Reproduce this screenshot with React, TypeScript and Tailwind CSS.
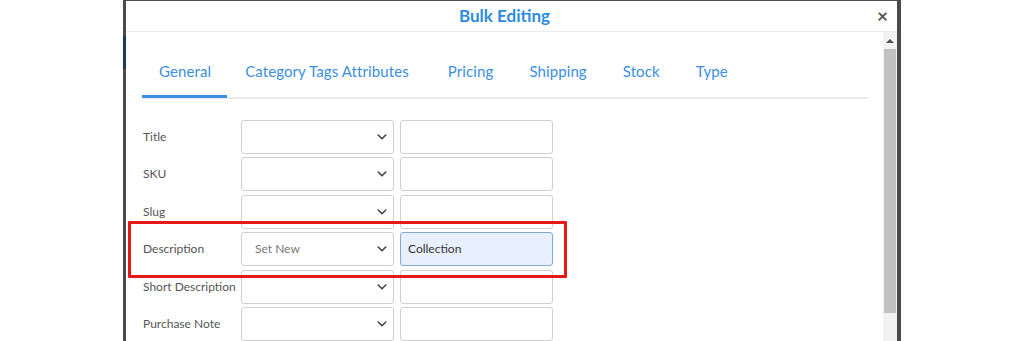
const rows = [
  { label: "Title" },
  { label: "SKU" },
  { label: "Slug" },
  { label: "Description", select: "Set New", value: "Collection" },
  { label: "Short Description" },
  { label: "Purchase Note" },
];

const tabs = [
  { name: "General", cls: "pl-[17px] pr-[16px]" },
  { name: "Category Tags Attributes", cls: "pl-[18px] pr-[21px]" },
  { name: "Pricing", cls: "px-[18px]" },
  { name: "Shipping", cls: "px-[18px]" },
  { name: "Stock", cls: "px-[18px]" },
  { name: "Type", cls: "px-[18px]" },
];

function Chevron() {
  return (
    <svg width="10" height="6" viewBox="0 0 10 6" className="text-[#444]">
      <path d="M1.2 1 5 4.8 8.8 1" fill="none" stroke="currentColor" strokeWidth="1.6" strokeLinecap="round" strokeLinejoin="round" />
    </svg>
  );
}

export default function App() {
  return (
    <div className="w-[1024px] h-[341px] bg-white overflow-hidden font-['Lato',sans-serif]">
      <div className="relative ml-[123px] w-[778px] h-[341px] border-l-[3px] border-r-[4px] border-t border-[#4a4a4a] flex flex-col">
        {/* dark strip of the page behind the dialog */}
        <div className="absolute -left-[3px] top-[35px] w-[3px] h-[33px] bg-[#1d3a5c]"></div>

        {/* Header */}
        <div className="h-[31px] shrink-0 flex items-center justify-center relative border-b border-[#ececec] pr-[14px]">
          <h1 className="text-[17px] font-bold text-[#2b8be0]">Bulk Editing</h1>
          <span className="absolute right-[9px] top-[5px] text-[19px] leading-none font-bold text-[#555]">×</span>
        </div>

        <div className="flex flex-1 min-h-0">
          {/* Body */}
          <div className="flex-1 pl-[16px] pr-[15px] relative">
            <div className="flex border-b-2 border-[#e8e8e8]">
              {tabs.map((t, i) => (
                <div
                  key={t.name}
                  className={
                    t.cls +
                    (i === 0
                      ? " pt-[30px] pb-[15px] text-[15px] leading-[18px] tracking-[0.1px] text-[#3a8fe0] border-b-[3px] border-[#3a8fe0] -mb-[1px]"
                      : " pt-[30px] pb-[15px] text-[15px] leading-[18px] tracking-[0.1px] text-[#3a8fe0] border-b-[3px] border-transparent -mb-[1px]")
                  }
                >
                  {t.name}
                </div>
              ))}
            </div>

            <div className="mt-[21px] flex flex-col gap-y-[3.4px]">
              {rows.map((r) => (
                <div key={r.label} className="flex items-center h-[34px]">
                  <div className="w-[99px] pl-[1px] text-[12px] text-[#555] whitespace-nowrap">{r.label}</div>
                  <div className="w-[153px] h-[34px] border border-[#cfcfcf] rounded-[3px] flex items-center justify-between pl-[13px] pr-[6px] bg-white">
                    <span className="text-[12px] text-[#777]">{r.select ?? ""}</span>
                    <Chevron />
                  </div>
                  <div
                    className={
                      r.value
                        ? "ml-[6px] w-[153px] h-[34px] border border-[#86a9cf] rounded-[3px] bg-[#e8f0fd] flex items-center pl-[7px] text-[12px] text-[#333]"
                        : "ml-[6px] w-[153px] h-[34px] border border-[#cfcfcf] rounded-[3px] bg-white"
                    }
                  >
                    {r.value ?? ""}
                  </div>
                </div>
              ))}
            </div>

            {/* highlight annotation */}
            <div className="absolute left-[2px] top-[189px] w-[439px] h-[57px] border-[3px] border-[#e81818] rounded-[1px]"></div>
          </div>

          {/* Scrollbar */}
          <div className="w-[14px] bg-[#f1f1f1] flex flex-col items-center">
            <div className="h-[17px] flex items-center justify-center">
              <div className="w-0 h-0 border-l-[4px] border-r-[4px] border-b-[4px] border-l-transparent border-r-transparent border-b-[#505050]"></div>
            </div>
            <div className="w-[12px] h-[264px] bg-[#c1c1c1]"></div>
          </div>
        </div>
      </div>
    </div>
  );
}
